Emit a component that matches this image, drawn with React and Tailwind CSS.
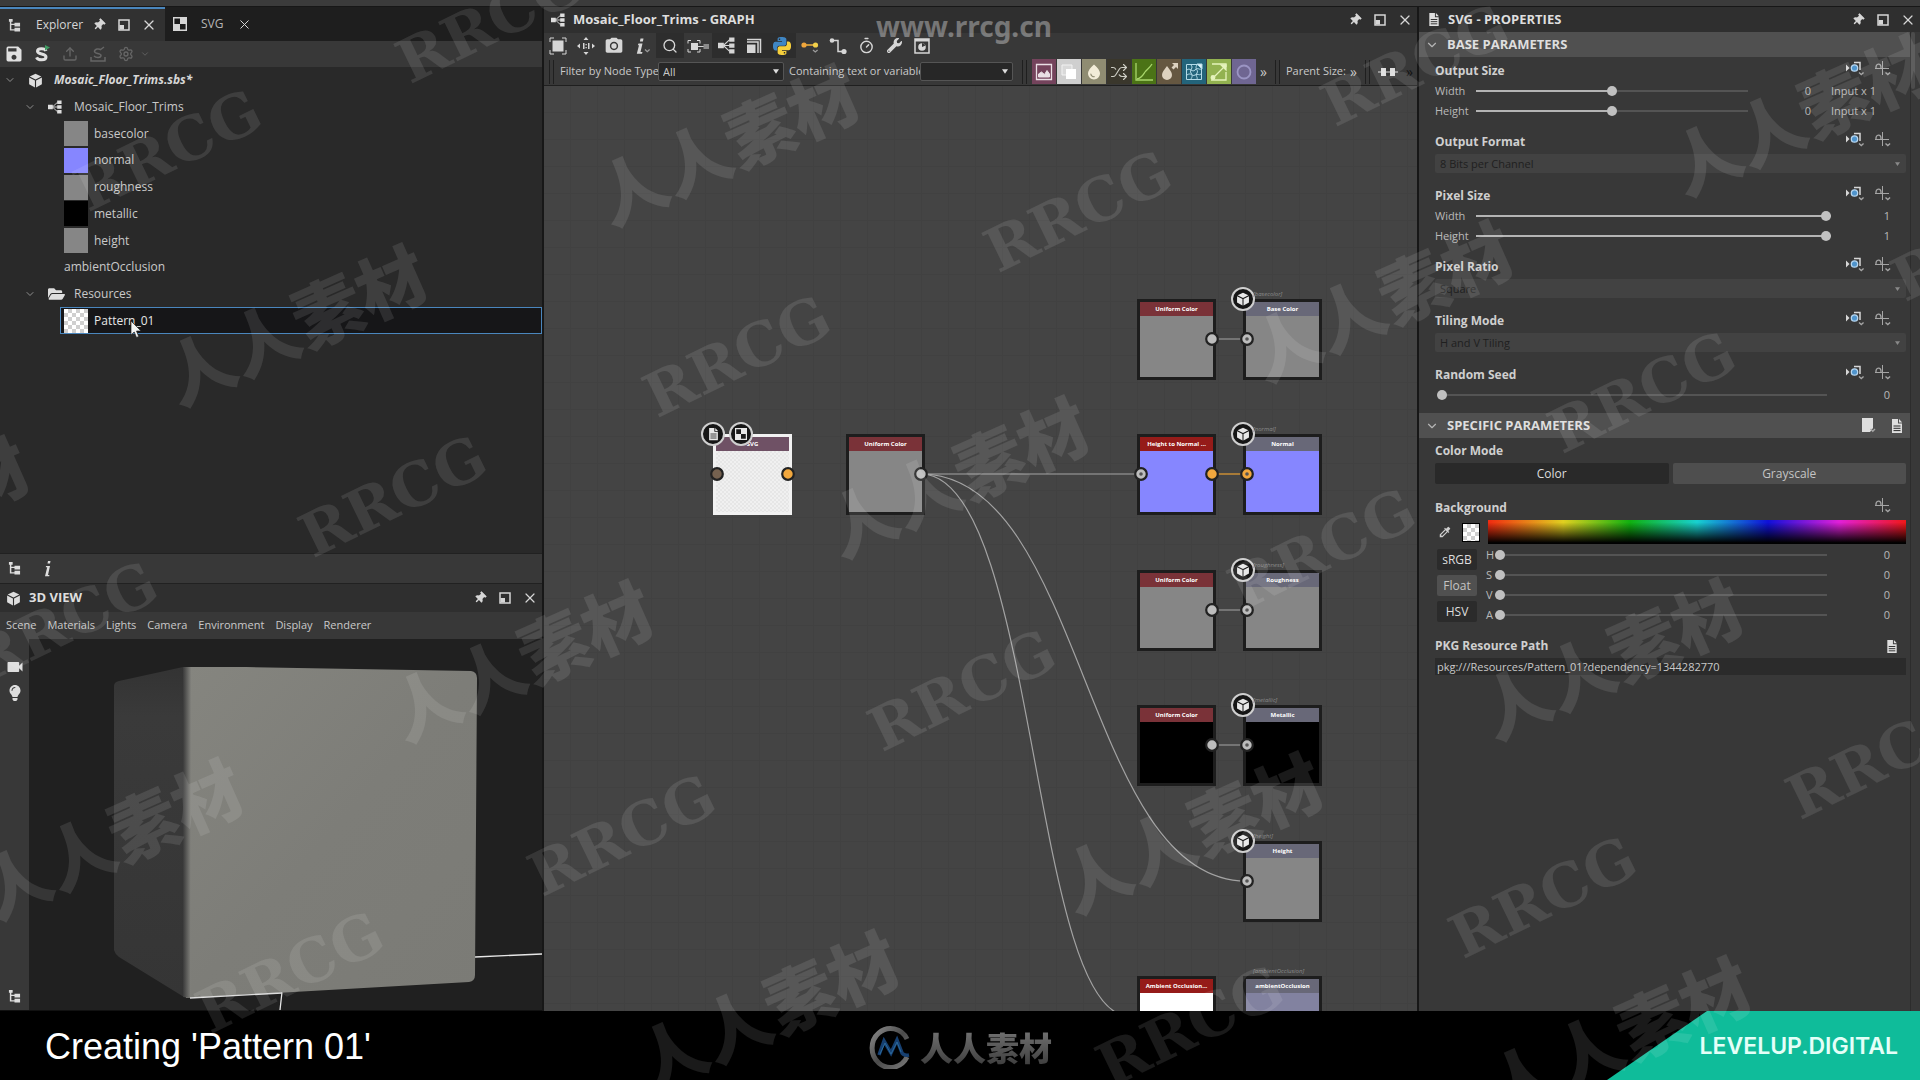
import React from "react";
import { FaThumbtack, FaFolderOpen, FaLightbulb, FaWrench } from "react-icons/fa";
import { MdSave, MdVideocam, MdPhotoCamera, MdColorize, MdWaterDrop } from "react-icons/md";
import { ChevronDown, X, Shuffle, Upload, Search, Timer, Settings } from "lucide-react";

/* ---------- icons ---------- */

const CubeIcon = ({ className }) => (
  <svg viewBox="0 0 16 16" className={className} fill="currentColor">
    <path d="M8 .8 14.2 3.8 8 6.9 1.8 3.8z" />
    <path d="M1.2 4.9 7.4 8v7.4L1.2 12z" />
    <path d="M14.8 4.9 8.6 8v7.4l6.2-3.4z" />
  </svg>
);

const TreeIcon = ({ className }) => (
  <svg viewBox="0 0 14 14" className={className} fill="currentColor">
    <path d="M1 0h4v3H3.600v2H7V4h6v4H7V6.500H3.600V11H7V9.500h6v4H7v-1H2V3H1z" />
  </svg>
);

const GraphIcon = ({ className }) => (
  <svg viewBox="0 0 16 16" className={className}>
    <path d="M5 8 11 2.500M5 8h6M5 8l6 5.500" stroke="currentColor" fill="none" />
    <path d="M0 5.500h5.500v5H0zM10.500.5h5v4h-5zM10.500 6h5v4h-5zM10.500 11.500h5v4h-5z" fill="currentColor" />
  </svg>
);

const DockIcon = ({ className }) => (
  <svg viewBox="0 0 12 12" className={className}>
    <path d="M1 1h10v10H1z" fill="none" stroke="currentColor" strokeWidth="1.500" />
    <path d="M1.500 6H6v4.500H1.500z" fill="currentColor" />
  </svg>
);

const CheckerIcon = ({ className }) => (
  <svg viewBox="0 0 14 14" className={className}>
    <path d="M.7.7h12.600v12.600H.7z" fill="#1b1b1b" stroke="currentColor" strokeWidth="1.400" />
    <path d="M7 1h6v6H7zM1 7h6v6H1z" fill="currentColor" />
  </svg>
);

const DocIcon = ({ className }) => (
  <svg viewBox="0 0 12 16" className={className}>
    <path d="M1 1h6v4.500h4V15H1z" fill="currentColor" />
    <path d="M8 1l3.200 3.500H8z" fill="currentColor" />
    <path d="M2.500 8h7M2.500 10.300h7M2.500 12.600h7" stroke="#2b2b2b" strokeWidth="1" />
  </svg>
);

const ExposeIcon = () => (
  <svg viewBox="0 0 18 16" className="h-4 w-[18px]">
    <path d="M0 3.500 3.500 7 0 10.500z" fill="#d6d6d6" />
    <path d="M8 1.500h6V9" fill="none" stroke="#d6d6d6" strokeWidth="1.500" />
    <circle cx="8.500" cy="7" r="4" fill="#383838" />
    <circle cx="8.500" cy="7" r="3.200" fill="#4f94cc" stroke="#b7d5ee" strokeWidth="1.300" />
    <path d="M13 11.500l2.300 2 2.300-2" fill="none" stroke="#a5a5a5" strokeWidth="1.400" />
  </svg>
);

const CurveIcon = () => (
  <svg viewBox="0 0 18 16" className="h-4 w-[18px]" fill="none" stroke="#a5a5a5">
    <path d="M8.500 0v14M1 7.500h14" />
    <path d="M2 7.500C1.500 2 7.500 1.500 7 7" strokeWidth="1.300" />
    <path d="M11.500 11.500l2.300 2 2.300-2" strokeWidth="1.400" />
  </svg>
);

const PY_HALF =
  "M14.25.18l.9.2.73.26.59.3.45.32.34.34.25.34.16.33.1.3.04.26.02.2-.01.13V8.5l-.05.63-.13.55-.21.46-.26.38-.3.31-.33.25-.35.19-.35.14-.33.1-.3.07-.26.04-.21.02H8.77l-.69.05-.59.14-.5.22-.41.27-.33.32-.27.35-.2.36-.15.37-.1.35-.07.32-.04.27-.02.21v3.06H3.17l-.21-.03-.28-.07-.32-.12-.35-.18-.36-.26-.36-.36-.35-.46-.32-.59-.28-.73-.21-.88-.14-1.050-.05-1.230.06-1.220.16-1.040.24-.87.32-.71.36-.57.4-.44.42-.33.42-.24.4-.16.36-.1.32-.05.24-.01h.16l.06.01h8.16v-.83H6.18l-.01-2.750-.02-.37.05-.34.11-.31.17-.28.25-.26.31-.23.38-.2.44-.18.51-.15.58-.12.64-.1.71-.06.77-.04.84-.02 1.270.05zM7.950 2.160l-.23.33-.08.41.08.41.23.34.33.22.41.09.41-.09.33-.22.23-.34.08-.41-.08-.41-.23-.33-.33-.22-.41-.09-.41.09z";

const PythonIcon = () => (
  <svg viewBox="0 0 24 24" className="h-[18px] w-[18px]" fillRule="evenodd">
    <path d={PY_HALF} fill="#3f86c4" />
    <path d={PY_HALF} fill="#f6cf3c" transform="rotate(180 12 12)" />
  </svg>
);

const tool = "h-[18px] w-[18px]";

const toolbarIcons = [
  {
    name: "Fit view",
    icon: (
      <svg viewBox="0 0 18 18" className={tool}>
        <path d="M3.500 3.500h11v11h-11z" fill="currentColor" />
        <path d="M1 5V1h4M13 1h4v4M17 13v4h-4M5 17H1v-4" fill="none" stroke="currentColor" />
      </svg>
    ),
  },
  {
    name: "Zoom 1:1",
    icon: (
      <svg viewBox="0 0 18 18" className={tool} fill="currentColor">
        <path d="M9 0l2.500 3h-5zM9 18l2.500-3h-5zM0 9l3-2.500v5zM18 9l-3-2.500v5zM6 6h1.500v6H6zM11 6h1.500v6H11zM8.500 7h1.300v1.300H8.500zM8.500 10h1.300v1.300H8.500z" />
      </svg>
    ),
  },
  { name: "Snapshot", icon: <MdPhotoCamera className="h-5 w-5" /> },
  {
    name: "Info",
    icon: (
      <svg viewBox="0 0 18 18" className={tool}>
        <path d="M7.500 1.500h3l-.6 3h-3zM5.500 6.500h4L7.500 15h2l-.5 1.700H3.800L6 8.200H4.800z" fill="currentColor" />
        <path d="M12 12.500l2.300 2.200 2.300-2.200" fill="none" stroke="#9b9b9b" strokeWidth="1.300" />
      </svg>
    ),
  },
  { name: "Search", dark: true, icon: <Search className="h-4 w-4" /> },
  {
    name: "Node preview",
    icon: (
      <svg viewBox="0 0 22 16" className="h-4 w-[22px]">
        <path d="M4 5h7v7H4z" fill="currentColor" />
        <path d="M1 5.500V2.500h3M10 2.500h3v3M13 11v3h-3M4 14H1v-3M11 8.500h6" fill="none" stroke="currentColor" />
        <path d="M16.500 6H22v5h-5.500z" fill="#8a8a8a" />
      </svg>
    ),
  },
  { name: "Graph", dark: true, icon: <GraphIcon className="h-[17px] w-[17px]" /> },
  {
    name: "Layers",
    dark: true,
    icon: (
      <svg viewBox="0 0 16 16" className="h-4 w-4">
        <path d="M1 6.500h8.500V15H1z" fill="currentColor" />
        <path d="M1 4h11v11M1 1.500h13.500V15" fill="none" stroke="currentColor" strokeWidth="1.500" />
      </svg>
    ),
  },
  { name: "Python", dark: true, icon: <PythonIcon /> },
  {
    name: "Link colour",
    icon: (
      <svg viewBox="0 0 18 18" className={tool}>
        <path d="M3 8h12" stroke="#f0b23c" strokeWidth="1.500" />
        <circle cx="3" cy="8" r="2.600" fill="#f0a63c" />
        <circle cx="14.500" cy="8" r="2.600" fill="#f2d04a" />
        <path d="M12 13l2.300 2 2.300-2" fill="none" stroke="#9b9b9b" strokeWidth="1.300" />
      </svg>
    ),
  },
  {
    name: "Link routing",
    icon: (
      <svg viewBox="0 0 18 18" className={tool}>
        <path d="M3 3.500h6v11h6" fill="none" stroke="currentColor" strokeWidth="1.500" />
        <circle cx="3" cy="3.500" r="2.300" fill="currentColor" />
        <circle cx="15" cy="14.500" r="2.600" fill="currentColor" />
      </svg>
    ),
  },
  { name: "Timings", icon: <Timer className="h-[17px] w-[17px]" /> },
  { name: "Tools", icon: <FaWrench className="h-[15px] w-[15px]" /> },
  {
    name: "Bitmap",
    icon: (
      <svg viewBox="0 0 16 16" className="h-4 w-4">
        <path d="M1 1h14v14H1z" fill="none" stroke="currentColor" strokeWidth="1.500" />
        <path d="M1 1h14v2.500H1z" fill="currentColor" />
        <circle cx="8" cy="9" r="3.800" fill="currentColor" />
        <path d="M8 9V5a4 4 0 0 1 3.500 2.500z" fill="#383838" />
      </svg>
    ),
  },
];

const atomicNodes = [
  {
    name: "Bitmap",
    bg: "bg-[#74435c]",
    icon: (
      <svg viewBox="0 0 18 18" className={tool} stroke="#eadfe5" fill="none">
        <path d="M1.500 1.500h15v15h-15z" strokeWidth="1.300" />
        <path d="M3.500 14V11l3-2 3 2.500 2.500-4 2.500 3.500v3z" fill="#eadfe5" />
      </svg>
    ),
  },
  {
    name: "Blend",
    bg: "bg-[#cfcfcf]",
    icon: (
      <svg viewBox="0 0 18 18" className={tool}>
        <path d="M2 2h10v10H2z" fill="#d9d9d9" stroke="#f2f2f2" />
        <path d="M6 6h10v10H6z" fill="#fff" />
      </svg>
    ),
  },
  { name: "Blur", bg: "bg-[#8f8c72]", icon: <MdWaterDrop className="h-[18px] w-[18px] text-[#f2ecd8]" /> },
  { name: "Channel shuffle", bg: "bg-[#3a372c]", icon: <Shuffle className="h-[18px] w-[18px] text-[#cfcfc6]" strokeWidth={1.5} /> },
  {
    name: "Curve",
    bg: "bg-[#4b7316]",
    icon: (
      <svg viewBox="0 0 20 20" className="h-5 w-5" fill="none" stroke="#a8d66c" strokeWidth="1.300">
        <path d="M2 1v17h17" />
        <path d="M3 17c5-1 6-4 8-7s4-3 7-8" />
      </svg>
    ),
  },
  {
    name: "Directional blur",
    bg: "bg-[#655741]",
    icon: (
      <svg viewBox="0 0 20 20" className="h-5 w-5" fill="#ddd2c0">
        <path d="M8 4c3 4 5 6.500 5 9a5 5 0 0 1-10 0c0-2.500 2-5 5-9zM13 1h6v6l-2-2-2.500 2.500-2-2L15 3z" />
      </svg>
    ),
  },
  {
    name: "Warp",
    bg: "bg-[#23647b]",
    icon: (
      <svg viewBox="0 0 18 18" className={tool} fill="none" stroke="#b4dbe8">
        <path d="M1.500 1.500h15v15h-15zM2 7c3-3 5 3 8 0s4 0 6-1M2 12c4-3 5 2 8 0s4 1 6-1M6 2c3 3-2 5 0 8s1 4 0 6M12 2c-3 4 2 5 0 8s1 4 0 6" />
        <path d="M12 1h5v5z" fill="#e0f3f9" />
      </svg>
    ),
  },
  {
    name: "Directional warp",
    bg: "bg-[#92b250]",
    icon: (
      <svg viewBox="0 0 18 18" className={tool} fill="none" stroke="#e5f3bb" strokeWidth="1.300">
        <path d="M2 1h14v3M1 17h15V9M3 15 15 3" />
        <path d="M11 2h5v5z" fill="#e5f3bb" />
        <circle cx="3" cy="14.500" r="1.800" fill="#e5f3bb" />
      </svg>
    ),
  },
  {
    name: "Distance",
    bg: "bg-[#6f6692]",
    icon: (
      <svg viewBox="0 0 18 18" className={tool} fill="none" stroke="#9b95c4" strokeWidth="1.800">
        <circle cx="9" cy="9" r="6.500" />
      </svg>
    ),
  },
];

/* ---------- shared bits ---------- */

const IconButton = ({ name, className = "", children }) => (
  <button type="button" aria-label={name} className={`flex shrink-0 items-center justify-center ${className}`}>
    {children}
  </button>
);

const WindowButtons = () => (
  <div className="ml-auto flex items-center text-[#d6d6d6]">
    <IconButton name="Pin" className="w-[25px]">
      <FaThumbtack className="h-3 w-3 rotate-45" />
    </IconButton>
    <IconButton name="Undock" className="w-[25px]">
      <DockIcon className="h-3 w-3" />
    </IconButton>
    <IconButton name="Close" className="w-[25px]">
      <X className="h-4 w-4" strokeWidth={1.8} />
    </IconButton>
  </div>
);

const Handle = () => <span className="h-6 w-[5px] shrink-0 border-x border-[#1f1f1f]" />;

/* ---------- explorer ---------- */

const outputs = [
  { name: "basecolor", swatch: "bg-[#868686]" },
  { name: "normal", swatch: "bg-[#8686ff]" },
  { name: "roughness", swatch: "bg-[#868686]" },
  { name: "metallic", swatch: "bg-black" },
  { name: "height", swatch: "bg-[#868686]" },
];

const Explorer = () => (
  <section className="flex min-h-0 flex-1 flex-col bg-[#292929]">
    <div className="flex h-[34px] shrink-0 bg-[#1e1e1e] text-[#d6d6d6]">
      <div className="flex w-[165px] items-center border-t-2 border-[#4a86bd] bg-[#313131] pr-1 pl-2">
        <TreeIcon className="h-[13px] w-[13px]" />
        <span className="ml-[15px] text-xs">Explorer</span>
        <WindowButtons />
      </div>
      <div className="flex items-center pl-2">
        <CheckerIcon className="h-[14px] w-[14px]" />
        <span className="ml-[14px] text-xs text-[#b5b5b5]">SVG</span>
        <IconButton name="Close" className="ml-[14px]">
          <X className="h-[15px] w-[15px]" strokeWidth={1.6} />
        </IconButton>
      </div>
    </div>

    <div className="flex h-[26px] shrink-0 items-center bg-[#383838] text-[#666]">
      <IconButton name="Save" className="w-7 text-[#e0e0e0]">
        <MdSave className="h-5 w-5" />
      </IconButton>
      <IconButton name="Substance" className="w-7">
        <svg viewBox="0 0 18 18" className={tool}>
          <path d="M13 6C12 3 4.500 3 4.500 6.300c0 3.400 8.500 2 8.500 5.700 0 3.800-8 3.600-9.500.3" fill="none" stroke="#e0e0e0" strokeWidth="3" />
          <path d="M12 0l5 2.500-5 3z" fill="#3f9a62" />
        </svg>
      </IconButton>
      <IconButton name="Publish" className="w-7">
        <Upload className="h-4 w-4" />
      </IconButton>
      <IconButton name="Export" className="w-7">
        <svg viewBox="0 0 16 16" className="h-4 w-4" fill="none" stroke="currentColor" strokeWidth="1.500">
          <path d="M1 11v4h14v-4M11 4C9 2 4.500 3 4.500 5.500S11 7 11 9.500 6 12 4 10M10 4l4-3" />
        </svg>
      </IconButton>
      <IconButton name="Settings" className="w-7">
        <Settings className="h-4 w-4" />
      </IconButton>
      <ChevronDown className="h-[10px] w-[10px]" />
    </div>

    <div className="min-h-0 flex-1 text-xs text-[#c9c9c9]">
      <ul className="grid h-[267px] grid-rows-10">
        <li className="flex items-center pl-1">
          <ChevronDown className="h-3 w-3 text-[#8e8e8e]" />
          <CubeIcon className="ml-3 h-[15px] w-[15px] text-[#dedede]" />
          <span className="ml-[11px] font-bold text-[#d6d6d6] italic">Mosaic_Floor_Trims.sbs*</span>
        </li>
        <li className="flex items-center pl-6">
          <ChevronDown className="h-3 w-3 text-[#8e8e8e]" />
          <GraphIcon className="ml-3 h-[14px] w-[14px] text-[#dedede]" />
          <span className="ml-3">Mosaic_Floor_Trims</span>
        </li>
        {outputs.map((o) => (
          <li key={o.name} className="flex items-center pl-16">
            <span className={`h-[25px] w-6 ${o.swatch}`} />
            <span className="ml-[6px]">{o.name}</span>
          </li>
        ))}
        <li className="flex items-center pl-16">ambientOcclusion</li>
        <li className="flex items-center pl-6">
          <ChevronDown className="h-3 w-3 text-[#8e8e8e]" />
          <FaFolderOpen className="ml-3 h-4 w-[17px] text-[#dedede]" />
          <span className="ml-[9px]">Resources</span>
        </li>
        <li className="relative ml-[60px] flex items-center border border-[#4a86bd] bg-[#161618] pl-[3px] text-[#e6e6e6]">
          <span className="h-6 w-6 bg-white bg-[conic-gradient(#cfcfcf_25%,#fff_0_50%,#cfcfcf_0_75%,#fff_0)] bg-[size:8px_8px]" />
          <span className="ml-[6px]">Pattern_01</span>
          <svg viewBox="0 0 12 19" className="absolute top-3 left-[69px] z-10 h-[19px] w-3">
            <path d="M1 1v14l3.200-3 2.300 5.500 2.200-1L6.500 11H11z" fill="#f4f4f4" stroke="#222" strokeWidth=".7" />
          </svg>
        </li>
      </ul>
    </div>

    <div className="flex h-[31px] shrink-0 items-center border-y border-[#212121] bg-[#383838] pl-2 text-[#dedede]">
      <TreeIcon className="h-[13px] w-[13px]" />
      <svg viewBox="0 0 8 16" className="ml-[22px] h-4 w-2" fill="currentColor">
        <path d="M5 0h2.500L7 2.600H4.500zM3 5h4L5 14h1.500l-.4 1.200H2L4.200 6.200H2.800z" />
      </svg>
    </div>
  </section>
);

/* ---------- 3D view ---------- */

const viewMenus = ["Scene", "Materials", "Lights", "Camera", "Environment", "Display", "Renderer"];

const View3D = () => (
  <section className="flex h-[427px] shrink-0 flex-col">
    <header className="flex h-7 shrink-0 items-center bg-[#2f2f2f] pl-[6px] text-[#dedede]">
      <CubeIcon className="h-[15px] w-[15px]" />
      <h2 className="ml-2 text-[13px] font-bold">3D VIEW</h2>
      <WindowButtons />
    </header>
    <nav className="flex h-[27px] shrink-0 items-center gap-[11px] bg-[#383838] pl-[6px] text-[11px] text-[#c9c9c9]">
      {viewMenus.map((m) => (
        <button key={m} type="button">
          {m}
        </button>
      ))}
    </nav>
    <div className="flex min-h-0 flex-1 border-b border-[#111]">
      <div className="flex w-[29px] shrink-0 flex-col items-center bg-[#383838] pt-[18px] text-[#dedede]">
        <MdVideocam className="h-5 w-5" />
        <FaLightbulb className="mt-2 h-4 w-4" />
        <TreeIcon className="mt-auto mb-[7px] h-[13px] w-[13px]" />
      </div>
      <div className="min-w-0 flex-1 bg-[#202020]">
        <svg viewBox="0 2 513 371" preserveAspectRatio="xMinYMin slice" className="h-full w-full">
          <defs>
            <linearGradient id="front" x1="0" y1="0" x2="1" y2="1">
              <stop offset="0" stopColor="#85857f" />
              <stop offset=".5" stopColor="#7d7d78" />
              <stop offset="1" stopColor="#7b7b76" />
            </linearGradient>
            <linearGradient id="edge" x1="0" x2="1">
              <stop offset="0" stopColor="#3a3a3a" />
              <stop offset="1" stopColor="#82827d" />
            </linearGradient>
            <linearGradient id="side" x1="0" y1="0" x2="0" y2="1">
              <stop offset="0" stopColor="#333" />
              <stop offset=".15" stopColor="#3a3a3a" />
              <stop offset="1" stopColor="#353535" />
            </linearGradient>
          </defs>
          <path d="M446 320 513 317M253 355 251 373" stroke="#e6e6e6" strokeWidth="1.300" />
          <path d="M85 49q0-4 5-5L154 30h8v331l-7-1-65-40q-4-3-5-7z" fill="url(#side)" />
          <path d="M157 30h60l225 4q6 1 6 7l-2 297q0 6-6 7L157 361z" fill="url(#front)" />
          <path d="M154 30h8v331l-8-1z" fill="url(#edge)" />
          <path d="M161 361 253 356" stroke="#dcdcdc" strokeWidth="1.300" />
        </svg>
      </div>
    </div>
  </section>
);

/* ---------- graph ---------- */

const titleColors = {
  red: "bg-[#7a3238]",
  bright: "bg-[#951b19]",
  mauve: "bg-[#6f5165]",
  slate: "bg-[#686878]",
};

const fills = {
  gray: "bg-[#868686]",
  blue: "bg-[#8686ff]",
  black: "bg-black",
  white: "bg-white",
  lilac: "bg-[#8282a0]",
  checker: "bg-[conic-gradient(#e6e6e6_25%,#f0f0f0_0_50%,#e6e6e6_0_75%,#f0f0f0_0)] bg-[size:4px_4px]",
};

const nodes = [
  { id: "svg", x: 169, y: 348, title: "SVG", color: "mauve", fill: "checker", selected: true, left: "brown", right: "orange" },
  { id: "uc0", x: 302, y: 348, title: "Uniform Color", color: "red", fill: "gray", right: "gray" },
  { id: "uc1", x: 593, y: 213, title: "Uniform Color", color: "red", fill: "gray", right: "gray" },
  { id: "base", x: 699, y: 213, title: "Base Color", color: "slate", fill: "gray", left: "gray", tag: "[basecolor]" },
  { id: "h2n", x: 593, y: 348, title: "Height to Normal ...", color: "bright", fill: "blue", left: "gray", right: "orange" },
  { id: "normal", x: 699, y: 348, title: "Normal", color: "slate", fill: "blue", left: "orange", tag: "[normal]" },
  { id: "uc2", x: 593, y: 484, title: "Uniform Color", color: "red", fill: "gray", right: "gray" },
  { id: "rough", x: 699, y: 484, title: "Roughness", color: "slate", fill: "gray", left: "gray", tag: "[roughness]" },
  { id: "uc3", x: 593, y: 619, title: "Uniform Color", color: "red", fill: "black", right: "gray" },
  { id: "metal", x: 699, y: 619, title: "Metallic", color: "slate", fill: "black", left: "gray", tag: "[metallic]" },
  { id: "height", x: 699, y: 755, title: "Height", color: "slate", fill: "gray", left: "gray", tag: "[height]" },
  { id: "ao", x: 593, y: 890, title: "Ambient Occlusion...", color: "bright", fill: "white" },
  { id: "aoOut", x: 699, y: 890, title: "ambientOcclusion", color: "slate", fill: "lilac", tag: "[ambientOcclusion]", noBadge: true },
];

const portColors = { gray: "#bdbdbd", orange: "#f2a83e", brown: "#75614f" };

const Port = ({ color, side, ring }) => (
  <svg
    viewBox="0 0 14 14"
    className={`absolute top-[33px] h-[14px] w-[14px] ${side === "left" ? "-left-[3px]" : "-right-[3px]"}`}
  >
    <circle cx="7" cy="7" r="5.800" fill={portColors[color]} stroke="#222" strokeWidth="2.200" />
    {ring && <circle cx="7" cy="7" r="1.800" fill="#555" />}
  </svg>
);

const badge = "flex h-6 w-6 items-center justify-center rounded-full border-2 border-[#cfcfcf] bg-[#161616] text-[#e8e8e8]";

const GraphNode = ({ node }) => (
  <div className="absolute h-[81px] w-[79px]" style={{ left: node.x, top: node.y }}>
    <div className={`flex h-full flex-col border-3 ${node.selected ? "border-[#f2f2f2]" : "border-[#1d1d1d]"}`}>
      <div className={`flex h-[14px] shrink-0 items-center justify-center overflow-hidden text-[6px] font-bold whitespace-nowrap text-white ${titleColors[node.color]}`}>
        {node.title}
      </div>
      <div className={`flex-1 ${fills[node.fill]}`} />
    </div>
    {node.left && <Port color={node.left} side="left" ring={node.left !== "brown"} />}
    {node.right && <Port color={node.right} side="right" />}
    {node.selected && (
      <div className="absolute -top-3 -left-3 flex gap-1">
        <span className={badge}>
          <DocIcon className="h-[14px] w-[11px]" />
        </span>
        <span className={badge}>
          <CheckerIcon className="h-3 w-3" />
        </span>
      </div>
    )}
    {node.tag && !node.noBadge && (
      <span className={`absolute -top-3 -left-3 ${badge}`}>
        <CubeIcon className="h-[14px] w-[14px]" />
      </span>
    )}
    {node.tag && <span className="absolute -top-[9px] left-[10px] text-[6px] text-[#8a8a8a] italic">{node.tag}</span>}
  </div>
);

const Canvas = () => (
  <div className="relative min-h-0 flex-1 overflow-hidden bg-[#444]">
    <svg className="absolute inset-0 h-full w-full" fill="none">
      <defs>
        <pattern id="grid" width="27" height="27" patternUnits="userSpaceOnUse">
          <path d="M26.500 0v27M0 26.500h27" stroke="#414141" />
        </pattern>
      </defs>
      <rect width="100%" height="100%" fill="url(#grid)" />
      <g stroke="#a3a3a3" strokeWidth="1.200">
        <path d="M377 388H597" />
        <path d="M377 388C540 388 540 795 702 795" />
        <path d="M377 388C493 388 487 930 585 930" />
        <path d="M669 253h34M669 524h34M669 659h34" />
      </g>
      <path d="M669 388h34" stroke="#c98c35" strokeWidth="1.500" />
    </svg>
    {nodes.map((n) => (
      <GraphNode key={n.id} node={n} />
    ))}
  </div>
);

const FilterSelect = ({ id, value, className }) => (
  <span className={`relative shrink-0 ${className}`}>
    <select id={id} className="block h-[19px] w-full appearance-none rounded-xs border border-[#555] bg-[#272727] pl-1 leading-4">
      <option>{value}</option>
    </select>
    <svg viewBox="0 0 8 6" className="pointer-events-none absolute top-[7px] right-[5px] h-[5px] w-[6px]">
      <path d="M0 0h8L4 6z" fill="#dedede" />
    </svg>
  </span>
);

const Graph = () => (
  <section className="flex min-w-0 flex-col overflow-hidden border-x-2 border-[#171717] bg-[#383838]">
    <header className="flex h-[26px] shrink-0 items-center bg-[#2f2f2f] pl-[7px] text-[#dedede]">
      <GraphIcon className="h-[14px] w-[14px]" />
      <h2 className="ml-2 text-[13px] font-bold">Mosaic_Floor_Trims - GRAPH</h2>
      <WindowButtons />
    </header>
    <div className="flex h-[25px] shrink-0 text-[#d6d6d6]">
      {toolbarIcons.map((t) => (
        <IconButton key={t.name} name={t.name} className={`w-7 ${t.dark ? "bg-[#2d2d2d]" : ""}`}>
          {t.icon}
        </IconButton>
      ))}
    </div>
    <div className="flex h-7 shrink-0 items-center overflow-hidden border-b border-[#1f1f1f] pl-[5px] text-[11px] whitespace-nowrap text-[#c9c9c9]">
      <Handle />
      <label htmlFor="nodeType" className="ml-[6px] w-[98px] shrink-0">
        Filter by Node Type
      </label>
      <FilterSelect id="nodeType" value="All" className="w-[126px]" />
      <label htmlFor="variable" className="ml-[5px] w-[131px] shrink-0">
        Containing text or variable
      </label>
      <FilterSelect id="variable" value="" className="mr-[9px] w-[93px]" />
      <Handle />
      <div className="ml-[5px] flex shrink-0 gap-px">
        {atomicNodes.map((n) => (
          <IconButton key={n.name} name={n.name} className={`h-[25px] w-6 ${n.bg}`}>
            {n.icon}
          </IconButton>
        ))}
      </div>
      <span className="mr-2 ml-1 shrink-0 text-sm">»</span>
      <Handle />
      <span className="ml-[6px] shrink-0">Parent Size:</span>
      <span className="mr-2 ml-1 shrink-0 text-sm">»</span>
      <Handle />
      <svg viewBox="0 0 20 10" className="ml-2 h-[10px] w-5 shrink-0">
        <path d="M0 5h20" stroke="#dedede" />
        <path d="M3 1h5v8H3zM12 1h5v8h-5z" fill="#dedede" />
      </svg>
      <span className="ml-2 shrink-0 text-sm text-[#111]">»</span>
    </div>
    <Canvas />
  </section>
);

/* ---------- properties ---------- */

const Slider = ({ id, value, label }) => (
  <input
    id={id}
    type="range"
    aria-label={label}
    min="0"
    max="100"
    defaultValue={value}
    style={{ "--fill": `${value}%` }}
    className="h-3 min-w-0 flex-1 appearance-none bg-transparent [&::-webkit-slider-runnable-track]:h-[2px] [&::-webkit-slider-runnable-track]:bg-[linear-gradient(to_right,#b4b4b4_var(--fill),#545454_var(--fill))] [&::-webkit-slider-thumb]:-mt-1 [&::-webkit-slider-thumb]:h-[10px] [&::-webkit-slider-thumb]:w-[10px] [&::-webkit-slider-thumb]:appearance-none [&::-webkit-slider-thumb]:rounded-full [&::-webkit-slider-thumb]:bg-[#c0c0c0]"
  />
);

const ParamTitle = ({ children, expose = true, htmlFor }) => (
  <div className="flex h-5 items-center">
    {htmlFor ? (
      <label htmlFor={htmlFor} className="text-xs font-bold text-[#cfcfcf]">
        {children}
      </label>
    ) : (
      <h4 className="text-xs font-bold text-[#cfcfcf]">{children}</h4>
    )}
    <div className="mr-[14px] mb-1 ml-auto flex gap-[10px]">
      {expose && (
        <IconButton name="Expose">
          <ExposeIcon />
        </IconButton>
      )}
      <IconButton name="Function">
        <CurveIcon />
      </IconButton>
    </div>
  </div>
);

const SizeRow = ({ id, label, value, number, unit }) => (
  <div className="flex h-5 items-center">
    <label htmlFor={id} className="w-[41px]">
      {label}
    </label>
    <Slider id={id} value={value} />
    {unit ? (
      <>
        <span className="w-[63px] text-right">{number}</span>
        <span className="ml-5 w-[75px]">{unit}</span>
      </>
    ) : (
      <span className="w-[75px] pr-4 text-right">{number}</span>
    )}
  </div>
);

const DisabledSelect = ({ id, value }) => (
  <div className="relative mt-[2px] h-[19px]">
    <select id={id} disabled className="block h-full w-full appearance-none rounded-xs bg-[#424242] pl-[5px] text-[11px] leading-[19px] text-[#1f1f1f] opacity-100">
      <option>{value}</option>
    </select>
    <svg viewBox="0 0 8 6" className="pointer-events-none absolute top-2 right-[6px] h-1 w-[5px]">
      <path d="M0 0h8L4 6z" fill="#8a8a8a" />
    </svg>
  </div>
);

const SectionBar = ({ title, children }) => (
  <div className="flex h-[25px] items-center bg-[#505050] pl-[6px] text-[#dedede]">
    <ChevronDown className="h-[14px] w-[14px] text-[#b5b5b5]" />
    <h3 className="ml-2 text-[13px] font-bold">{title}</h3>
    <div className="mr-[6px] ml-auto flex gap-[14px]">{children}</div>
  </div>
);

const modeButton = "h-[21px] w-10 rounded-xs";

const Properties = () => (
  <section className="flex min-w-0 flex-col overflow-hidden bg-[#383838] text-[11px] text-[#b9b9b9]">
    <header className="flex h-[25px] shrink-0 items-center bg-[#2f2f2f] pl-[9px] text-[#dedede]">
      <DocIcon className="h-[15px] w-3" />
      <h2 className="ml-2 text-[13px] font-bold">SVG - PROPERTIES</h2>
      <WindowButtons />
    </header>
    <div className="flex min-h-0 flex-1">
      <div className="min-w-0 flex-1 border-r border-[#2c2c2c]">
        <SectionBar title="BASE PARAMETERS" />
        <div className="pt-1 pr-1 pl-4">
          <ParamTitle>Output Size</ParamTitle>
          <SizeRow id="outW" label="Width" value={50} number="0" unit="Input x 1" />
          <SizeRow id="outH" label="Height" value={50} number="0" unit="Input x 1" />
          <div className="h-[11px]" />
          <ParamTitle htmlFor="format">Output Format</ParamTitle>
          <DisabledSelect id="format" value="8 Bits per Channel" />
          <div className="h-[13px]" />
          <ParamTitle>Pixel Size</ParamTitle>
          <SizeRow id="pxW" label="Width" value={100} number="1" />
          <SizeRow id="pxH" label="Height" value={100} number="1" />
          <div className="h-[11px]" />
          <ParamTitle htmlFor="ratio">Pixel Ratio</ParamTitle>
          <DisabledSelect id="ratio" value="Square" />
          <div className="h-[13px]" />
          <ParamTitle htmlFor="tiling">Tiling Mode</ParamTitle>
          <DisabledSelect id="tiling" value="H and V Tiling" />
          <div className="h-[13px]" />
          <ParamTitle htmlFor="seed">Random Seed</ParamTitle>
          <div className="mb-2 flex h-5 items-center pl-[2px]">
            <Slider id="seed" value={0} />
            <span className="w-[79px] pr-4 text-right">0</span>
          </div>
        </div>

        <SectionBar title="SPECIFIC PARAMETERS">
          <IconButton name="Presets">
            <svg viewBox="0 0 14 16" className="h-4 w-[14px]">
              <path d="M0 0h11v10l-3 4H0z" fill="#dedede" />
              <path d="M8.500 11l2.300 2.200L13 11" fill="none" stroke="#a5a5a5" strokeWidth="1.400" />
            </svg>
          </IconButton>
          <IconButton name="Resource">
            <DocIcon className="h-4 w-[14px]" />
          </IconButton>
        </SectionBar>
        <div className="pt-[3px] pr-1 pl-4">
          <h4 className="flex h-5 items-center text-xs font-bold text-[#cfcfcf]">Color Mode</h4>
          <div className="mt-[2px] flex gap-1 text-xs text-[#dedede]">
            <button type="button" className="h-[21px] flex-1 rounded-xs bg-[#292929]">
              Color
            </button>
            <button type="button" className="h-[21px] flex-1 rounded-xs bg-[#4e4e4e] text-[#c4c4c4]">
              Grayscale
            </button>
          </div>
          <div className="h-[14px]" />
          <ParamTitle expose={false}>Background</ParamTitle>
          <div className="mt-[2px] flex h-6 items-center">
            <IconButton name="Pick colour" className="ml-[3px] w-[14px]">
              <MdColorize className="h-[14px] w-[14px] text-[#cfcfcf]" />
            </IconButton>
            <span className="ml-[10px] h-[19px] w-[18px] border border-black bg-[conic-gradient(#cfcfcf_25%,#fff_0_50%,#cfcfcf_0_75%,#fff_0)] bg-[size:8px_8px]" />
            <div className="ml-2 h-full flex-1 bg-[linear-gradient(to_bottom,transparent_10%,black_95%),linear-gradient(to_right,#f02a10,#e0d020_18%,#10b010_34%,#18d0d0_50%,#1010d8_67%,#e020d8_84%,#f01818)]" />
          </div>
          <div className="flex">
            <div className="flex w-[51px] flex-col gap-[5px] pt-[5px] pl-[2px] text-xs text-[#dedede]">
              <button type="button" className={`${modeButton} bg-[#2b2b2b]`}>
                sRGB
              </button>
              <button type="button" className={`${modeButton} bg-[#505050] text-[#c4c4c4]`}>
                Float
              </button>
              <button type="button" className={`${modeButton} bg-[#2b2b2b]`}>
                HSV
              </button>
            </div>
            <div className="flex-1 pt-px">
              {["H", "S", "V", "A"].map((c) => (
                <div key={c} className="flex h-5 items-center">
                  <label htmlFor={`ch${c}`} className="w-[9px]">
                    {c}
                  </label>
                  <Slider id={`ch${c}`} value={0} />
                  <span className="w-[79px] pr-4 text-right">0</span>
                </div>
              ))}
            </div>
          </div>
          <div className="mt-[11px] flex h-5 items-center pr-2">
            <label htmlFor="pkg" className="text-xs font-bold text-[#cfcfcf]">
              PKG Resource Path
            </label>
            <IconButton name="Open resource" className="ml-auto text-[#dedede]">
              <DocIcon className="h-[15px] w-3" />
            </IconButton>
          </div>
          <input
            id="pkg"
            readOnly
            value="pkg:///Resources/Pattern_01?dependency=1344282770"
            className="mt-[2px] block h-[17px] w-full bg-[#2b2b2b] pl-[2px] text-[11px] text-[#c9c9c9]"
          />
        </div>
      </div>
      <div className="w-[9px] shrink-0">
        <div className="h-[57px] w-1 rounded-xs bg-[#4c4c4c]" />
      </div>
    </div>
  </section>
);

/* ---------- overlay marks ---------- */

const latinMarks = [
  [490, 22], [168, 150], [1078, 211], [737, 356], [1642, 392], [393, 496], [1322, 549], [962, 690],
  [64, 622], [622, 835], [290, 972], [1880, 758], [1543, 897], [1415, 65], [1190, 1026], [1985, 240],
];
const hanMarks = [
  [726, 142], [294, 322], [956, 474], [520, 658], [110, 836], [1190, 830], [766, 1008],
  [1610, 656], [1380, 298], [1800, 112], [1618, 1034], [-104, 514],
];

const Marks = () => (
  <svg
    viewBox="0 0 1920 1080"
    preserveAspectRatio="xMidYMid slice"
    className="pointer-events-none absolute inset-0 z-20 h-full w-full"
    fill="#ffffff"
    fillOpacity=".1"
    textAnchor="middle"
    dominantBaseline="central"
  >
    {latinMarks.map(([x, y]) => (
      <text key={`${x}-${y}`} transform={`translate(${x} ${y}) rotate(-26)`} className="font-['DejaVu_Serif',serif] text-[60px] font-bold">
        RRCG
      </text>
    ))}
    {hanMarks.map(([x, y]) => (
      <text key={`${x}-${y}`} transform={`translate(${x} ${y}) rotate(-24)`} className="font-['Noto_Sans_CJK_SC',sans-serif] text-[70px] font-black">
        人人素材
      </text>
    ))}
  </svg>
);

const Footer = () => (
  <footer className="relative flex h-[69px] shrink-0 items-center justify-between bg-black">
    <p className="pt-[3px] pl-[45px] font-['Liberation_Sans',sans-serif] text-4xl text-white">Creating 'Pattern 01'</p>
    <div className="absolute inset-x-0 flex items-center justify-center gap-2 pt-[2px]">
      <svg viewBox="0 0 44 44" className="h-11 w-11">
        <defs>
          <linearGradient id="ring" x1="0" y1="0" x2="1" y2="1">
            <stop offset="0" stopColor="#8a8a8a" />
            <stop offset=".5" stopColor="#4a4a4a" />
            <stop offset="1" stopColor="#777" />
          </linearGradient>
        </defs>
        <path d="M39 14A18.500 19.500 0 1 0 39 32" fill="none" stroke="url(#ring)" strokeWidth="5" />
        <path d="M11 30 16 16l7 12 6-13 5 13q2 3 7 2" fill="none" stroke="#163f70" strokeWidth="3.500" />
        <path d="M12 29 17 18l6 11 6-12 4 10" fill="none" stroke="#2b6a9c" />
      </svg>
      <span className="bg-linear-to-b from-[#777] to-[#3c3c3c] bg-clip-text font-['Noto_Sans_CJK_SC',sans-serif] text-[33px] leading-10 font-black text-transparent">
        人人素材
      </span>
    </div>
    <div className="flex h-full w-[313px] items-center justify-end bg-[#0fbc9a] pt-[2px] pr-[22px] [clip-path:polygon(100px_0,100%_0,100%_100%,0_100%)]">
      <a href="#levelup" className="font-['Inter',sans-serif] text-[23px] font-semibold text-[#e4fff8]">
        LEVELUP.DIGITAL
      </a>
    </div>
  </footer>
);

const App = () => (
  <div className="relative flex h-screen w-full flex-col overflow-hidden bg-[#383838] font-['Open_Sans',sans-serif]">
    <div className="h-[7px] shrink-0 border-b border-[#171717] bg-[#3b3b3b]" />
    <main className="grid min-h-0 flex-1 grid-cols-[542px_minmax(0,1fr)_501px]">
      <div className="flex min-h-0 flex-col">
        <Explorer />
        <View3D />
      </div>
      <Graph />
      <Properties />
    </main>
    <Footer />
    <Marks />
    <div className="pointer-events-none absolute inset-x-0 top-2 z-20 pl-2 text-center font-['Noto_Sans',sans-serif] text-[28px] leading-9 font-bold text-white/35">
      www.rrcg.cn
    </div>
  </div>
);

export default App;
